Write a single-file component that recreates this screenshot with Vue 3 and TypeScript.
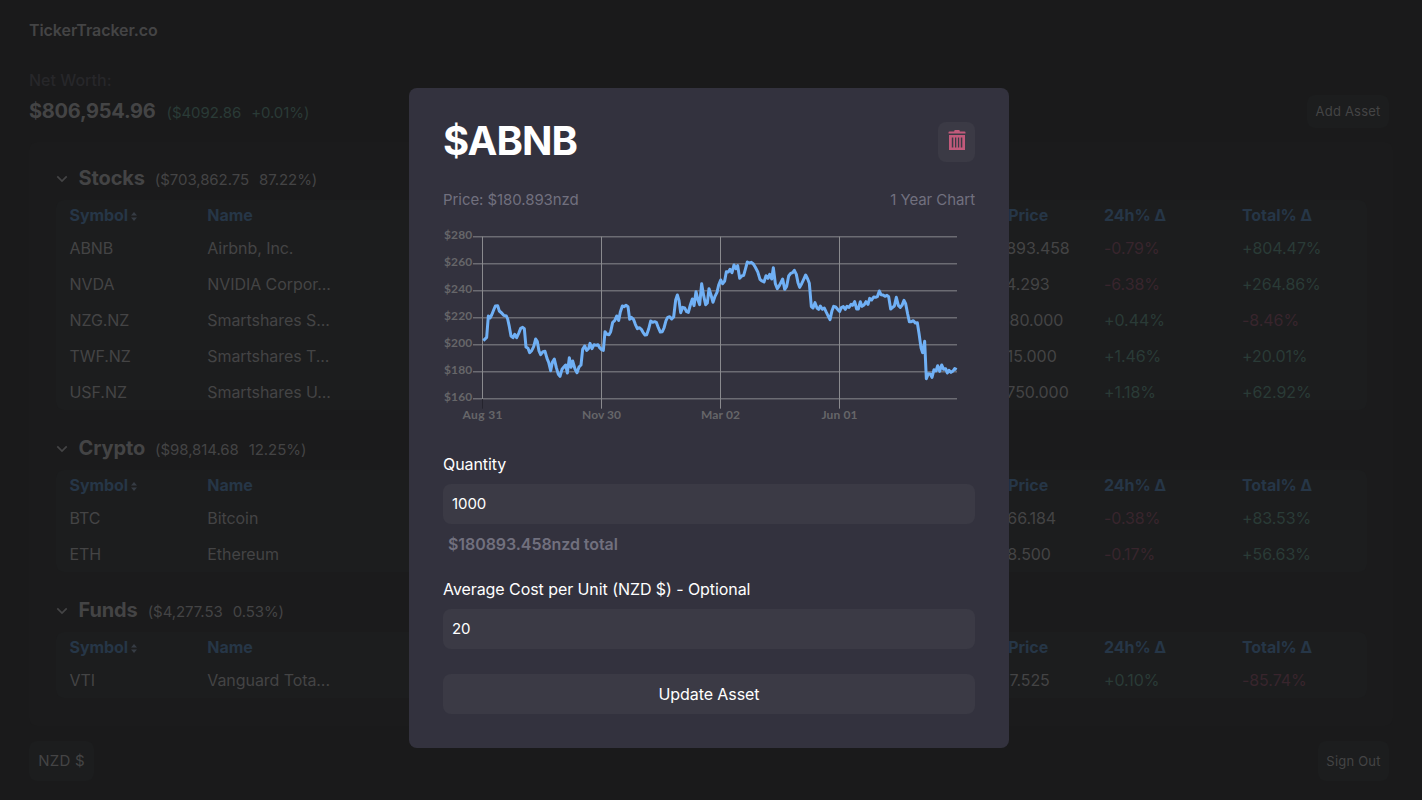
<script setup lang="ts">
import { ref } from 'vue'

interface Asset { symbol: string; name: string; total: string; day: string; gain: string }
interface Group { title: string; value: string; share: string; assets: Asset[] }

const groups: Group[] = [
  {
    title: 'Stocks', value: '$703,862.75', share: '87.22%',
    assets: [
      { symbol: 'ABNB', name: 'Airbnb, Inc.', total: '$180,893.458', day: '-0.79%', gain: '+804.47%' },
      { symbol: 'NVDA', name: 'NVIDIA Corpor...', total: '$3,614.293', day: '-6.38%', gain: '+264.86%' },
      { symbol: 'NZG.NZ', name: 'Smartshares S...', total: '$22,880.000', day: '+0.44%', gain: '-8.46%' },
      { symbol: 'TWF.NZ', name: 'Smartshares T...', total: '$21,415.000', day: '+1.46%', gain: '+20.01%' },
      { symbol: 'USF.NZ', name: 'Smartshares U...', total: '$418,750.000', day: '+1.18%', gain: '+62.92%' },
    ],
  },
  {
    title: 'Crypto', value: '$98,814.68', share: '12.25%',
    assets: [
      { symbol: 'BTC', name: 'Bitcoin', total: '$91,466.184', day: '-0.38%', gain: '+83.53%' },
      { symbol: 'ETH', name: 'Ethereum', total: '$7,348.500', day: '-0.17%', gain: '+56.63%' },
    ],
  },
  {
    title: 'Funds', value: '$4,277.53', share: '0.53%',
    assets: [{ symbol: 'VTI', name: 'Vanguard Tota...', total: '$4,277.525', day: '+0.10%', gain: '-85.74%' }],
  },
]

const tone = (v: string) => (v.startsWith('-') ? 'down' : 'up')

const quantity = ref('1000')
const cost = ref('20')

const rows = [280, 260, 240, 220, 200, 180, 160].map((price, i) => ({ label: '$' + price, y: 35.5 + i * 81 }))
const months = [
  { label: 'Aug 31', x: 142.5, w: 120 },
  { label: 'Nov 30', x: 499.5, w: 117 },
  { label: 'Mar 02', x: 856.5, w: 117 },
  { label: 'Jun 01', x: 1213.5, w: 108 },
]
const line =
  '145,347 155,337 160,273 165,279 170,270 176,255 181,243 188,242 193,258 200,264 206,271 214,273 218,282 223,305 228,333 234,338 239,328 245,338 251,325 257,310 263,307 268,311 273,366 279,370 284,383 290,377 296,365 302,342 307,350 312,378 317,389 324,380 330,379 336,400 341,412 347,437 352,412 358,402 364,428 370,448 375,454 381,433 386,427 392,420 397,444 403,398 408,427 413,408 420,432 426,443 432,426 438,420 443,373 449,363 455,376 461,370 465,355 471,371 477,359 484,361 489,359 494,368 500,374 505,376 510,320 516,328 522,329 527,320 533,292 ' +
  '539,287 545,273 551,286 556,261 562,243 567,245 573,241 579,245 584,283 589,277 596,284 601,298 607,311 613,308 619,313 624,322 630,330 635,329 641,312 647,288 653,292 659,290 664,292 670,308 676,321 682,320 687,309 693,287 698,277 704,275 710,282 716,276 722,225 727,210 732,226 737,263 743,247 749,249 755,260 760,262 766,240 772,222 777,242 783,200 789,226 794,239 800,176 806,212 812,239 817,234 822,191 828,210 834,232 840,214 846,202 851,180 857,165 863,176 869,168 874,140 880,141 885,133 891,143 897,120 903,131 908,122 914,160 920,153 926,151 931,133 937,111 943,114 949,112 955,117 961,127 968,140 975,163 981,168 987,171 993,152 999,160 1004,148 1010,162 1015,128 ' +
  '1021,176 1027,191 1033,182 1043,162 1049,193 1055,184 1061,153 1067,145 1073,143 1078,136 1084,148 1089,173 1094,187 1100,176 1106,163 1112,150 1118,162 1123,175 1129,245 1134,249 1140,233 1146,249 1151,253 1156,243 1162,253 1168,249 1173,260 1180,274 1185,284 1191,257 1196,244 1202,246 1208,253 1214,259 1219,248 1225,245 1231,253 1236,244 1242,247 1248,238 1253,241 1259,230 1265,252 1270,252 1276,230 1281,244 1287,240 1293,230 1299,238 1304,220 1310,225 1316,216 1322,217 1327,215 1333,198 1338,209 1344,210 1350,214 1356,211 1361,215 1367,252 1373,247 1378,243 1384,217 1390,241 1396,247 1401,241 1407,226 1412,236 1418,267 1423,290 1429,290 1435,287 1441,294 1447,293 1452,325 1458,368 1463,383 1469,349 1474,461 1480,446 1486,447 1491,457 1497,434 1503,438 1508,422 1514,439 1520,420 1526,433 1532,431 1537,444 1542,436 1548,442 1554,438 1559,431 1565,434'
</script>

<template>
  <div class="page">
    <header class="brand">TickerTracker.co</header>
    <section class="summary">
      <div>
        <div class="caption">Net Worth:</div>
        <div class="worth">
          <span class="amount">$806,954.96</span>
          <span class="change"><span>($4092.86</span><span>+0.01%)</span></span>
        </div>
      </div>
      <button class="btn add">Add Asset</button>
    </section>

    <main class="panel">
      <section v-for="g in groups" :key="g.title" class="group">
        <div class="group-head">
          <svg class="chevron" viewBox="0 0 14 14"><path d="M1.5 4 L7 9.5 L12.5 4" /></svg>
          <h2>{{ g.title }}</h2>
          <span class="stats"><span>({{ g.value }}</span><span>{{ g.share }})</span></span>
        </div>
        <div class="table">
          <div class="row head">
            <span class="symbol">Symbol<svg class="sort" viewBox="0 0 6 9"><path d="M0 3.5 L3 0 L6 3.5Z M0 5.5 L3 9 L6 5.5Z" /></svg></span>
            <span>Name</span><span class="total">Total Price</span><span>24h% Δ</span><span>Total% Δ</span>
          </div>
          <div v-for="a in g.assets" :key="a.symbol" class="row">
            <span>{{ a.symbol }}</span><span>{{ a.name }}</span><span class="total">{{ a.total }}</span>
            <span :class="tone(a.day)">{{ a.day }}</span><span :class="tone(a.gain)">{{ a.gain }}</span>
          </div>
        </div>
      </section>
    </main>

    <footer class="footer">
      <button class="btn currency">NZD $</button>
      <button class="btn signout">Sign Out</button>
    </footer>

    <div class="modal">
      <div class="modal-head">
        <h1>$ABNB</h1>
        <button class="trash" aria-label="Delete">
          <svg viewBox="0 0 18 21">
            <path d="M6.2 1.4 V0.9 Q6.2 0 7.2 0 H10.8 Q11.8 0 11.8 0.9 V1.4 H16.5 Q17.5 1.4 17.5 2.4 V3.4 H0.5 V2.4 Q0.5 1.4 1.5 1.4Z" />
            <path fill-rule="evenodd" d="M1 5H17V20H1Z M3.8 7.6V17.6H5.3V7.6Z M7 7.6V17.6H8.3V7.6Z M9.9 7.6V17.6H11.2V7.6Z M12.8 7.6V17.6H14.3V7.6Z" />
          </svg>
        </button>
      </div>
      <div class="meta"><span>Price: $180.893nzd</span><span>1 Year Chart</span></div>
      <svg class="chart" viewBox="24 0 1596 600">
        <g class="grid">
          <line v-for="r in rows" :key="r.label" x1="114" x2="1566" :y1="r.y" :y2="r.y" />
          <line v-for="m in months" :key="m.label" :x1="m.x" :x2="m.x" y1="35" :y2="m.x < 200 ? 522 : 551" />
          <line class="tick" x1="142.5" x2="142.5" y1="522" y2="551" />
        </g>
        <g class="axis">
          <text v-for="r in rows" :key="r.label" x="27" :y="r.y + 7" textLength="85">{{ r.label }}</text>
          <text v-for="m in months" :key="m.label" :x="m.x - m.w / 2" y="583" :textLength="m.w">{{ m.label }}</text>
        </g>
        <polyline class="price" :points="line" />
      </svg>
      <label for="quantity">Quantity</label>
      <input id="quantity" v-model="quantity" />
      <div class="worth-total">$180893.458nzd total</div>
      <label for="cost">Average Cost per Unit (NZD $) - Optional</label>
      <input id="cost" v-model="cost" />
      <button class="update">Update Asset</button>
    </div>
  </div>
</template>

<style>
body { margin: 0; background: #1a1a1b; }
</style>

<style scoped>
* { box-sizing: border-box; }
.page {
  position: relative; display: flex; flex-direction: column;
  width: 1422px; height: 800px; overflow: hidden; padding: 0 29px;
  background: #1a1a1b; color: #444445;
  font-family: Inter, "Liberation Sans", sans-serif; font-size: 16px; line-height: 24px;
  letter-spacing: -.07px;
}
button, input { font: inherit; letter-spacing: inherit; color: inherit; border: 0; padding: 0; outline: 0; }
h1, h2 { margin: 0; }
.brand { height: 68px; padding-top: 18px; font-weight: 600; }
.summary { height: 74px; display: flex; justify-content: space-between; padding-right: 4px; }
.caption { font-weight: 500; color: #27272a; letter-spacing: 0; }
.worth { display: flex; align-items: baseline; margin-top: 5px; }
.amount { font-size: 20px; line-height: 28px; font-weight: 700; letter-spacing: -.27px; }
.change { display: flex; gap: 10px; margin-left: 11px; font-size: 15px; color: #2a3b37; }
.btn { background: #1c1d1e; border-radius: 8px; letter-spacing: .2px; }
.add { margin-top: 27px; width: 82px; height: 33px; padding-bottom: 2px; font-size: 13px; }
.panel { height: 584px; padding: 21px 26px 0 27px; background: #1b1b1c; border-radius: 8px; }
.group { margin-bottom: 23px; }
.group-head { height: 37px; display: flex; align-items: baseline; }
.chevron { width: 12px; height: 12px; align-self: flex-start; margin: 10px 10.5px 0 0; fill: none; stroke: #444445; stroke-width: 2; }
h2 { font-size: 20px; line-height: 30px; font-weight: 700; letter-spacing: -.12px; }
.stats { display: flex; gap: 10px; margin-left: 10px; font-size: 15px; }
.table { background: #1c1d1e; border-radius: 8px; }
.row { display: grid; grid-template-columns: 137.8px 758.7px 138px 138px 1fr; height: 36px; padding-left: 13.5px; line-height: 36px; }
.head { height: 30px; line-height: 30px; font-weight: 700; color: #263647; }
.symbol { display: flex; align-items: center; }
.sort { width: 6px; height: 9px; margin: 2px 0 0 3px; fill: #363c44; }
.up { color: #2a3b37; }
.down { color: #38252d; }
.footer { display: flex; justify-content: space-between; padding: 15px 4px 0 0; }
.currency { width: 65px; height: 40px; font-size: 15px; }
.signout { width: 71px; height: 40px; font-size: 13px; }

.modal {
  position: absolute; left: 409px; top: 88px; width: 600px; height: 660px;
  display: flex; flex-direction: column; padding: 34px;
  background: #33323e; border-radius: 8px; color: #fff;
}
.modal-head { display: flex; justify-content: space-between; height: 40px; }
h1 { font-size: 40px; line-height: 38px; font-weight: 700; letter-spacing: -1px; }
.trash { width: 37px; height: 40px; display: flex; justify-content: center; padding-top: 8px; background: #3b3a45; border-radius: 8px; }
.trash svg { width: 18px; height: 21px; fill: #c15a7b; }
.meta { display: flex; justify-content: space-between; margin-top: 26px; font-size: 15px; color: #71707e; height: 37px; }
.chart { display: block; width: 532px; height: 200px; flex: none; margin-bottom: 27px; }
.grid { stroke: #8a8a8e; stroke-width: 3; }
.tick { stroke: #25242e; }
.axis { fill: #666669; font: 700 36px Lato, sans-serif; letter-spacing: 0; }
.price { fill: none; stroke: #70b0f5; stroke-width: 9; stroke-linejoin: round; }
label { height: 32px; }
input { width: 100%; height: 40px; padding: 0 9px 2px; background: #3b3a45; border-radius: 8px; font-size: 15px; flex: none; }
.worth-total { height: 53px; padding: 8px 5px 0; font-weight: 600; color: #71707e; }
.update { height: 40px; flex: none; margin-top: 25px; background: #3b3a45; border-radius: 8px; }
</style>
